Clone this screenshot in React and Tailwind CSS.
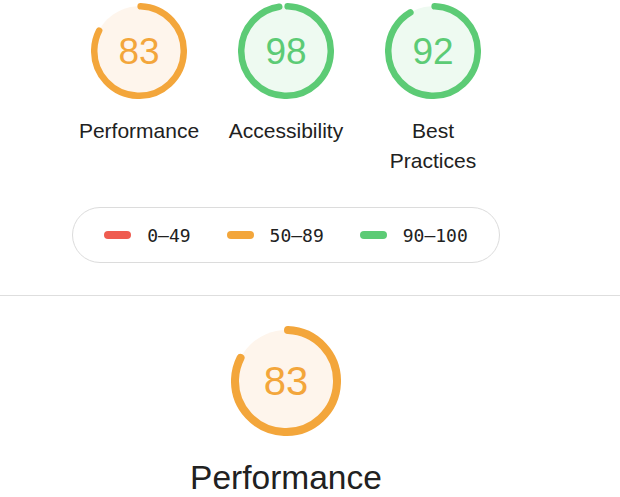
import React from 'react';

const COLORS = {
  average: { stroke: '#f3a63b', fill: '#fef5ec' },
  pass: { stroke: '#5ccb75', fill: '#eefaf1' },
};

function Gauge({ score, size, stroke, fontClass }) {
  const tone = score >= 90 ? COLORS.pass : COLORS.average;
  const r = (size - stroke) / 2;
  const c = 2 * Math.PI * r;
  // nudge the start so the rounded cap sits at 12 o'clock
  const offset = ((0.25 * stroke) / c) * 360;
  const arc = Math.max((score / 100) * c - stroke / 2, 0.01);

  return (
    <div className="relative flex items-center justify-center" style={{ width: size, height: size }}>
      <svg width={size} height={size} className="absolute inset-0">
        <circle cx={size / 2} cy={size / 2} r={r} fill={tone.fill} stroke="none" />
        <circle
          cx={size / 2}
          cy={size / 2}
          r={r}
          fill="none"
          stroke={tone.stroke}
          strokeWidth={stroke}
          strokeLinecap="round"
          strokeDasharray={`${arc} ${c}`}
          transform={`rotate(${offset - 90} ${size / 2} ${size / 2})`}
        />
      </svg>
      <span className={`relative ${fontClass}`} style={{ color: tone.stroke }}>
        {score}
      </span>
    </div>
  );
}

const categories = [
  { score: 83, label: ['Performance'] },
  { score: 98, label: ['Accessibility'] },
  { score: 92, label: ['Best', 'Practices'] },
];

const legend = [
  { color: 'bg-[#ef5c50]', text: '0–49' },
  { color: 'bg-[#f3a63b]', text: '50–89' },
  { color: 'bg-[#5ccb75]', text: '90–100' },
];

export default function App() {
  return (
    <div className="w-[620px] h-[497px] overflow-hidden bg-white font-['Liberation_Sans',Arial,sans-serif] text-[#212121]">
      <div className="w-[572px] flex flex-col items-center">
        <div className="flex justify-center pt-[3px]">
          {categories.map((cat) => (
            <div key={cat.score} className="w-[147px] flex flex-col items-center">
              <Gauge score={cat.score} size={96} stroke={6.5} fontClass="text-[37px] leading-none" />
              <div className="mt-[17px] text-[21px] leading-[30px] text-center">
                {cat.label.map((l) => (
                  <div key={l}>{l}</div>
                ))}
              </div>
            </div>
          ))}
        </div>

        <div className="mt-[31px] w-[428px] h-[56px] rounded-full border border-[#dcdcdc] flex items-center justify-center gap-[36px] font-['DejaVu_Sans_Mono',monospace] text-[18px]">
          {legend.map((item) => (
            <div key={item.text} className="flex items-center gap-[16px]">
              <span className={`block w-[27px] h-[8px] rounded-full ${item.color}`} />
              <span>{item.text}</span>
            </div>
          ))}
        </div>
      </div>

      <div className="mt-[32px] h-px w-full bg-[#dedede]" />

      <div className="w-[572px] flex flex-col items-center pt-[30px]">
        <Gauge score={83} size={110} stroke={8} fontClass="text-[40px] leading-none" />
        <div className="mt-[21px] text-[33.5px] leading-[42px]">Performance</div>
      </div>
    </div>
  );
}
